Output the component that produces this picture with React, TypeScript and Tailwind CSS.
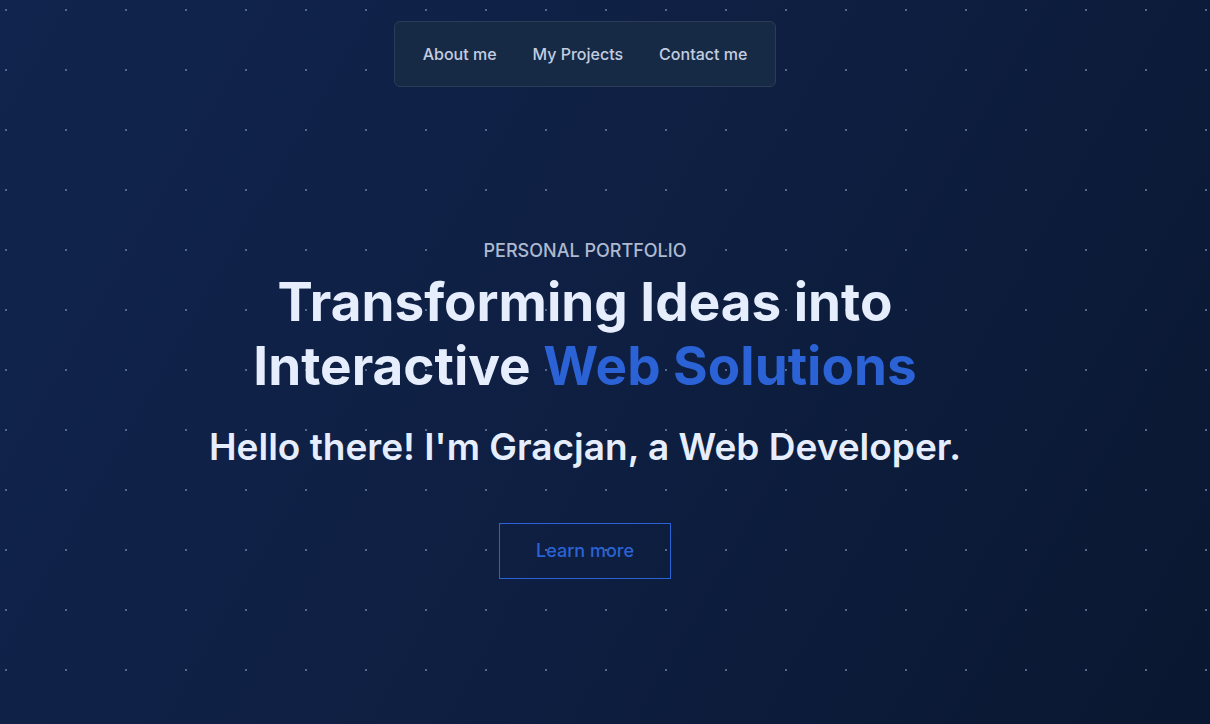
import React from 'react';

const links = ['About me', 'My Projects', 'Contact me'];

export default function App() {
  return (
    <div className="relative min-h-screen h-[724px] overflow-hidden bg-[linear-gradient(120deg,#11244d_0%,#0e1f42_50%,#0a1730_100%)] font-['Inter',sans-serif]">
      <div className="pointer-events-none absolute inset-0 bg-[radial-gradient(circle,#52678a_0.8px,transparent_1.2px)] bg-[size:60px_60px] bg-[position:-24px_-20px]" />
      <div className="relative flex flex-col items-center pr-10">
        <nav className="mt-[21px] flex items-center rounded-md border border-[#2c3c57] bg-[#172a45] px-[10px] py-5">
          {links.map((l) => (
            <a key={l} href="#" className="px-[18px] text-base leading-6 font-medium text-[#c3cde0]">
              {l}
            </a>
          ))}
        </nav>

        <p className="mt-[150px] text-lg leading-7 font-medium uppercase text-[#aebad0]">Personal Portfolio</p>
        <h1 className="mt-[5px] text-center text-[53px] leading-[64px] font-bold text-[#e6eefd]">
          Transforming Ideas into
          <br />
          Interactive <span className="text-[#2b63d6]">Web Solutions</span>
        </h1>
        <h2 className="mt-[29px] text-[37px] leading-10 font-semibold text-[#e6eefd]">
          Hello there! I'm Gracjan, a Web Developer.
        </h2>
        <button className="mt-[56px] h-[56px] w-[172px] border border-[#2b63d6] text-lg font-medium text-[#2b63d6]">
          Learn more
        </button>
      </div>
    </div>
  );
}
